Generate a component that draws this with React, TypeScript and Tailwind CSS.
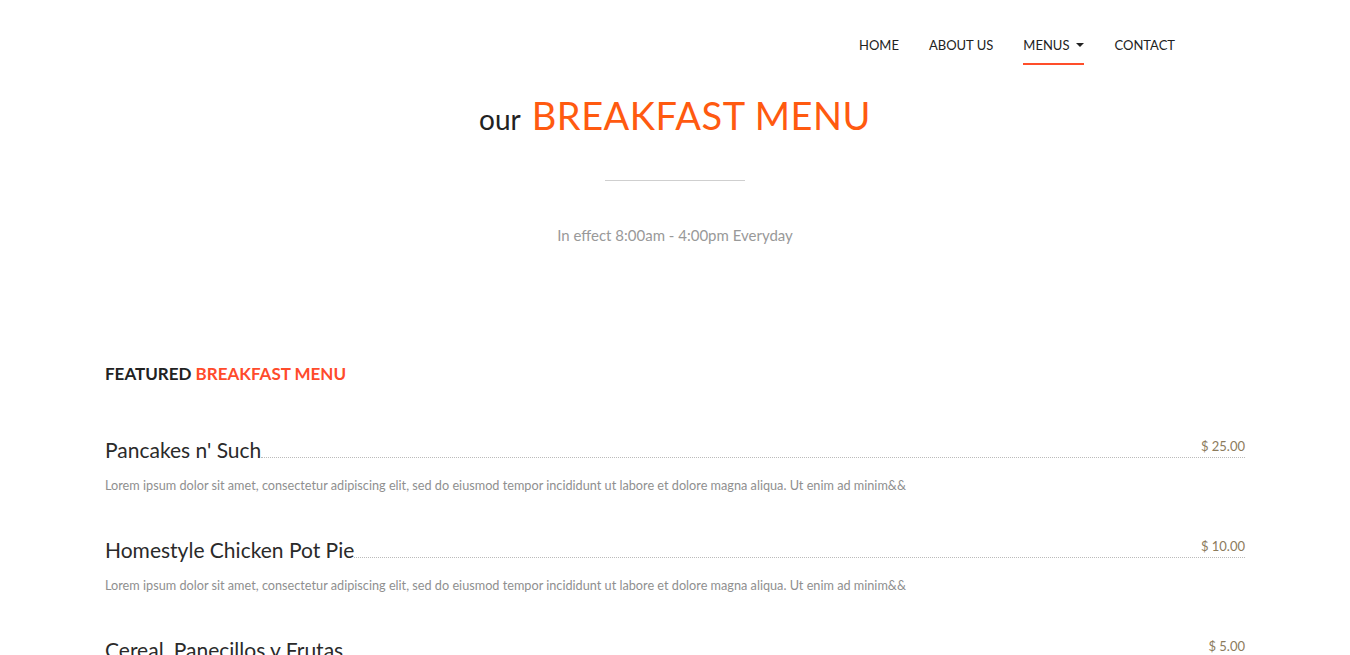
import React from 'react';

type MenuItem = {
    name: string;
    price: string;
    description: string;
};

const items: MenuItem[] = [
    {
        name: "Pancakes n' Such",
        price: "$ 25.00",
        description: "Lorem ipsum dolor sit amet, consectetur adipiscing elit, sed do eiusmod tempor incididunt ut labore et dolore magna aliqua. Ut enim ad minim&&",
    },
    {
        name: "Homestyle Chicken Pot Pie",
        price: "$ 10.00",
        description: "Lorem ipsum dolor sit amet, consectetur adipiscing elit, sed do eiusmod tempor incididunt ut labore et dolore magna aliqua. Ut enim ad minim&&",
    },
    {
        name: "Cereal, Panecillos y Frutas",
        price: "$ 5.00",
        description: "Lorem ipsum dolor sit amet, consectetur adipiscing elit, sed do eiusmod tempor incididunt ut labore et dolore magna aliqua. Ut enim ad minim&&",
    },
];

function App() {
    return (
        <div className="h-screen overflow-hidden bg-white font-['Lato',sans-serif] text-[#222]">
            {/* Navbar */}
            <nav className="flex justify-end pr-[175px] pt-[36px]">
                <ul className="flex gap-[30px] text-[13px] uppercase text-[#222]">
                    <li className="h-[29px]">Home</li>
                    <li className="h-[29px]">About us</li>
                    <li className="h-[29px] border-b-2 border-[#ff4e2a] flex items-start">
                        <span>Menus</span>
                        <svg width="8" height="4" viewBox="0 0 8 4" className="ml-[7px] mt-[7px]">
                            <path d="M0 0 L8 0 L4 4 Z" fill="#222" />
                        </svg>
                    </li>
                    <li className="h-[29px]">Contact</li>
                </ul>
            </nav>

            {/* Heading */}
            <header className="flex flex-col items-center pt-[22px]">
                <h1 className="flex items-baseline gap-[11px]">
                    <span className="text-[28px] text-[#222]">our</span>
                    <span className="text-[38px] text-[#ff5a10] tracking-[0.5px]">BREAKFAST MENU</span>
                </h1>
                <hr className="w-[140px] mt-[36px] border-t border-[#cfcfcf]" />
                <p className="mt-[43px] text-[15px] text-[#999]">In effect 8:00am - 4:00pm Everyday</p>
            </header>

            {/* Featured menu */}
            <section className="mx-[105px] pt-[115px]">
                <h2 className="text-[17px] font-bold uppercase leading-[24px]">
                    Featured <span className="text-[#ff4b2b]">Breakfast Menu</span>
                </h2>

                <ul className="mt-[47px]">
                    {items.map((item) => (
                        <li key={item.name} className="h-[100px]">
                            <div className="flex items-end">
                                <span className="text-[21px] leading-[28px] text-[#2a2a2a]">{item.name}</span>
                                <div className="flex-1 border-b border-dotted border-[#bbb] mb-[6px] text-right">
                                    <span className="text-[13px] text-[#8c7b5c]">{item.price}</span>
                                </div>
                            </div>
                            <p className="mt-[12px] text-[12.7px] text-[#8f8f8f]">{item.description}</p>
                        </li>
                    ))}
                </ul>
            </section>
        </div>
    );
}

export default App;
